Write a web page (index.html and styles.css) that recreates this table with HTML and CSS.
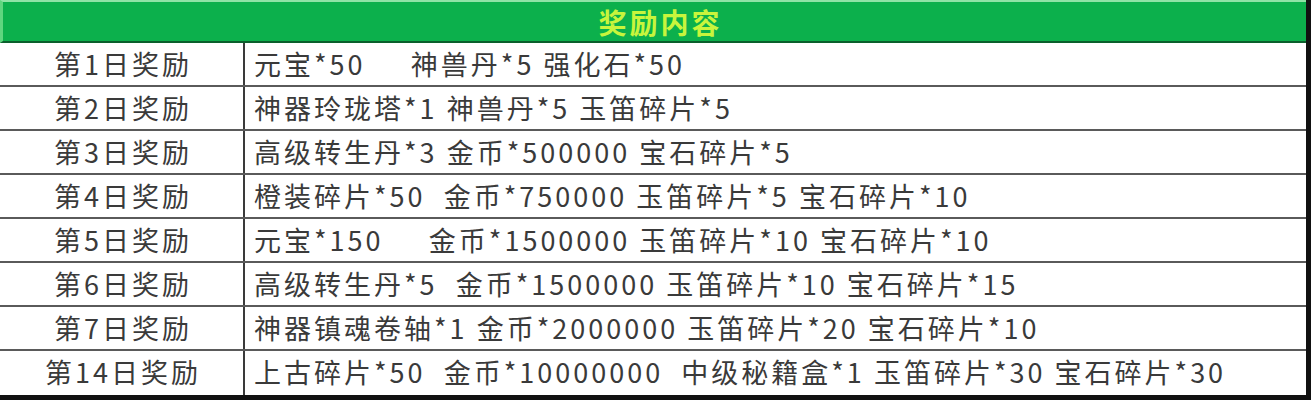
FILE: index.html
```html
<!DOCTYPE html>
<html lang="zh">
<head>
<meta charset="utf-8">
<link rel="stylesheet" href="styles.css">
</head>
<body>
<div class="sheet">
  <div class="head">奖励内容</div>
  <div class="row"><div class="day">第1日奖励</div><div class="items">元宝*50     神兽丹*5 强化石*50</div></div>
  <div class="row"><div class="day">第2日奖励</div><div class="items">神器玲珑塔*1 神兽丹*5 玉笛碎片*5</div></div>
  <div class="row"><div class="day">第3日奖励</div><div class="items">高级转生丹*3 金币*500000 宝石碎片*5</div></div>
  <div class="row"><div class="day">第4日奖励</div><div class="items">橙装碎片*50  金币*750000 玉笛碎片*5 宝石碎片*10</div></div>
  <div class="row"><div class="day">第5日奖励</div><div class="items">元宝*150     金币*1500000 玉笛碎片*10 宝石碎片*10</div></div>
  <div class="row"><div class="day">第6日奖励</div><div class="items">高级转生丹*5  金币*1500000 玉笛碎片*10 宝石碎片*15</div></div>
  <div class="row"><div class="day">第7日奖励</div><div class="items">神器镇魂卷轴*1 金币*2000000 玉笛碎片*20 宝石碎片*10</div></div>
  <div class="row last"><div class="day">第14日奖励</div><div class="items">上古碎片*50  金币*10000000  中级秘籍盒*1 玉笛碎片*30 宝石碎片*30</div></div>
</div>
</body>
</html>
```
FILE: styles.css
```css
html, body {
  margin: 0;
  padding: 0;
  background: #ffffff;
}
.sheet {
  width: 1306px;
  height: 395px;
  border-right: 5px solid #111111;
  border-bottom: 5px solid #111111;
  font-family: "Noto Sans CJK SC", "Noto Sans", sans-serif;
  color: #3a3a3a;
  display: flex;
  flex-direction: column;
}
.head {
  background: #0cb04c;
  border-top: 2px solid #8fe3a6;
  border-left: 3px solid #5fd67f;
  border-bottom: 2px solid #0b5f2c;
  color: #c8f53c;
  font-weight: bold;
  font-size: 28px;
  letter-spacing: 3px;
  display: flex;
  align-items: center;
  justify-content: center;
  padding-left: 12px;
  box-sizing: border-box;
  height: 43px;
}
.row {
  display: grid;
  grid-template-columns: 245px 1fr;
  height: 44px;
  box-sizing: border-box;
  border-bottom: 2px solid #5a5a5a;
  font-size: 27px;
  line-height: 42px;
}
.row.last {
  border-bottom: none;
}
.day {
  text-align: center;
  border-right: 2px solid #3a3a3a;
  letter-spacing: 3px;
  padding-left: 3px;
}
.items {
  padding-left: 9px;
  white-space: pre;
  letter-spacing: 3px;
}
```
